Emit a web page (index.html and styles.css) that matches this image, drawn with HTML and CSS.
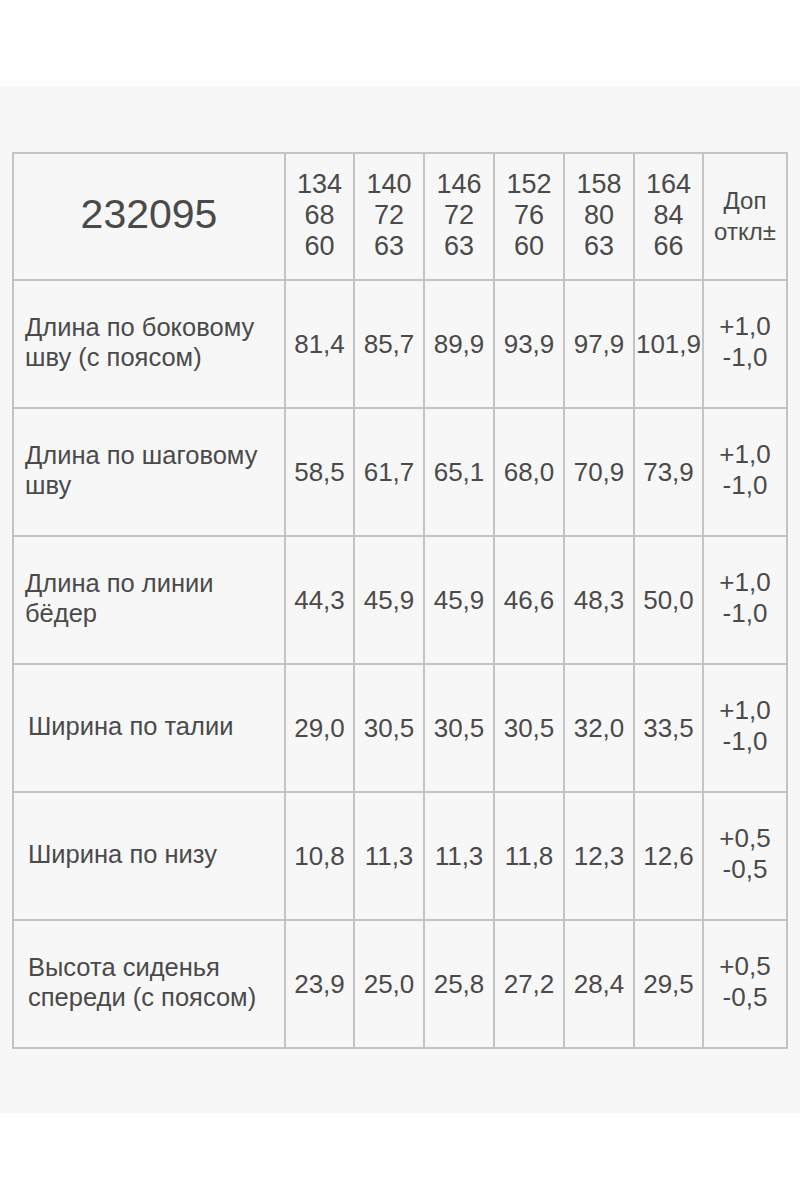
FILE: index.html
```html
<!DOCTYPE html>
<html lang="ru">
<head>
<meta charset="utf-8">
<title>232095</title>
<link rel="stylesheet" href="styles.css">
</head>
<body>
<div class="top"></div>
<section class="sheet">
  <table class="sizes">
    <colgroup>
      <col class="c-label">
      <col class="c-num"><col class="c-num2"><col class="c-num2"><col class="c-num2"><col class="c-num2"><col class="c-num">
      <col class="c-tol">
    </colgroup>
    <thead>
      <tr class="head">
        <th class="code">232095</th>
        <th class="size">134<br>68<br>60</th>
        <th class="size">140<br>72<br>63</th>
        <th class="size">146<br>72<br>63</th>
        <th class="size">152<br>76<br>60</th>
        <th class="size">158<br>80<br>63</th>
        <th class="size">164<br>84<br>66</th>
        <th class="tolh">Доп<br>откл±</th>
      </tr>
    </thead>
    <tbody>
      <tr>
        <td class="label">Длина по боковому<br>шву (с поясом)</td>
        <td>81,4</td><td>85,7</td><td>89,9</td><td>93,9</td><td>97,9</td><td>101,9</td>
        <td class="tol">+1,0<br>-1,0</td>
      </tr>
      <tr>
        <td class="label">Длина по шаговому<br>шву</td>
        <td>58,5</td><td>61,7</td><td>65,1</td><td>68,0</td><td>70,9</td><td>73,9</td>
        <td class="tol">+1,0<br>-1,0</td>
      </tr>
      <tr>
        <td class="label">Длина по линии<br>бёдер</td>
        <td>44,3</td><td>45,9</td><td>45,9</td><td>46,6</td><td>48,3</td><td>50,0</td>
        <td class="tol">+1,0<br>-1,0</td>
      </tr>
      <tr>
        <td class="label ind">Ширина по талии</td>
        <td>29,0</td><td>30,5</td><td>30,5</td><td>30,5</td><td>32,0</td><td>33,5</td>
        <td class="tol">+1,0<br>-1,0</td>
      </tr>
      <tr>
        <td class="label ind">Ширина по низу</td>
        <td>10,8</td><td>11,3</td><td>11,3</td><td>11,8</td><td>12,3</td><td>12,6</td>
        <td class="tol">+0,5<br>-0,5</td>
      </tr>
      <tr>
        <td class="label ind">Высота сиденья<br>спереди (с поясом)</td>
        <td>23,9</td><td>25,0</td><td>25,8</td><td>27,2</td><td>28,4</td><td>29,5</td>
        <td class="tol">+0,5<br>-0,5</td>
      </tr>
    </tbody>
  </table>
</section>
</body>
</html>
```

FILE: styles.css
```css
html, body {
  margin: 0;
  padding: 0;
  background: #fefefe;
}
body {
  font-family: "Liberation Sans", Arial, sans-serif;
  color: #4a4a4a;
}
.top {
  height: 86px;
  background: #fefefe;
}
.sheet {
  background: #f7f7f7;
  height: 1027px;
  padding: 66px 0 0 13px;
  box-sizing: border-box;
}
.sizes {
  border-collapse: collapse;
  table-layout: fixed;
  width: 774px;
  margin-left: -1px;
}
.c-label { width: 272px; }
.c-num { width: 69px; }
.c-num2 { width: 70px; }
.c-tol { width: 84px; }
.sizes th,
.sizes td {
  border: 2px solid #c4c4c4;
  padding: 0;
  text-align: center;
  vertical-align: middle;
  font-weight: normal;
  font-size: 26px;
  line-height: 31px;
  white-space: nowrap;
}
.head {
  height: 127px;
}
tbody tr {
  height: 128px;
}
.sizes th.code {
  font-size: 41px;
  padding-bottom: 4px;
}
.sizes th.size {
  font-size: 27px;
  line-height: 31px;
  padding-bottom: 2px;
}
.sizes th.tolh {
  font-size: 24px;
  line-height: 31px;
  padding-bottom: 2px;
}
.sizes td.label {
  text-align: left;
  padding-left: 11px;
  padding-bottom: 4px;
  font-size: 25.5px;
  line-height: 30px;
}
.sizes td.label.ind {
  padding-left: 14px;
}
.sizes td.tol {
  line-height: 31px;
  padding-bottom: 4px;
}
```
